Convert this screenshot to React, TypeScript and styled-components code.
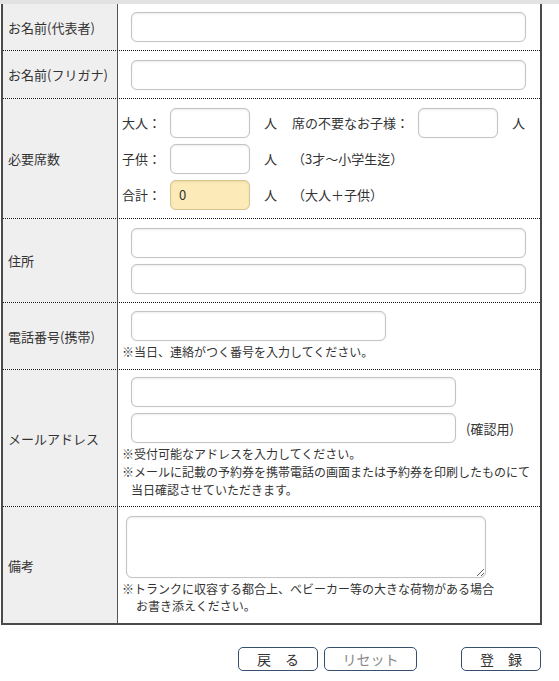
import React from 'react';
import styled, { createGlobalStyle } from 'styled-components';

const GlobalStyle = createGlobalStyle`
  html, body {
    margin: 0;
    padding: 0;
    background: #fff;
  }
  body {
    font-family: "Noto Sans CJK JP", "Noto Sans", sans-serif;
    color: #333;
    font-size: 13px;
  }
`;

const Page = styled.div`
  width: 559px;
`;

const TopBand = styled.div`
  height: 4px;
  background: #e2e2e2;
`;

const FormTable = styled.div`
  margin-left: 1px;
  width: 541px;
  box-sizing: border-box;
  border-left: 2px solid #4a4a4a;
  border-right: 2px solid #4a4a4a;
  border-bottom: 2px solid #4a4a4a;
`;

const Row = styled.div<{ $h: number; $last?: boolean }>`
  display: grid;
  grid-template-columns: 115px 1fr;
  box-sizing: border-box;
  height: ${(p) => p.$h}px;
  border-bottom: ${(p) => (p.$last ? 'none' : '1px dotted #111')};
`;

const Label = styled.div`
  display: flex;
  align-items: center;
  padding-left: 5px;
  background: #efefef;
  border-right: 1px solid #555;
  font-size: 13px;
  white-space: nowrap;
`;

const Cell = styled.div`
  display: flex;
  flex-direction: column;
  justify-content: center;
  align-items: flex-start;
  padding: 0 0 0 4px;
  min-width: 0;
`;

const Stack = styled.div`
  display: flex;
  flex-direction: column;
  gap: 6px;
  margin-left: 9px;
`;

const TextInput = styled.input<{ $w: number; $tint?: boolean }>`
  box-sizing: border-box;
  width: ${(p) => p.$w}px;
  height: 30px;
  border: 1px solid #c4c4c4;
  border-radius: 6px;
  background: ${(p) => (p.$tint ? '#fcebb9' : '#fff')};
  border-color: ${(p) => (p.$tint ? '#d8c68f' : '#c4c4c4')};
  box-shadow: inset 0 1px 2px rgba(0, 0, 0, 0.08), 0 0 1px rgba(0, 0, 0, 0.12);
  padding: 0 8px;
  font-family: inherit;
  font-size: 13px;
  color: #333;
  outline: none;
  margin: 0;
`;

const InlineRow = styled.div`
  display: flex;
  align-items: center;
`;

const Suffix = styled.span`
  margin-left: 10px;
  font-size: 13px;
`;

const SeatGrid = styled.div`
  display: flex;
  flex-direction: column;
  gap: 6px;
`;

const SeatLine = styled.div`
  display: flex;
  align-items: center;
  height: 30px;
  white-space: nowrap;
`;

const SeatLabel = styled.span<{ $w: number }>`
  width: ${(p) => p.$w}px;
  font-size: 13px;
`;

const Unit = styled.span`
  width: 42px;
  box-sizing: border-box;
  padding-left: 14px;
  font-size: 13px;
`;

const Notes = styled.div<{ $lh: number }>`
  margin-top: 2px;
  font-size: 12px;
  line-height: ${(p) => p.$lh}px;
  white-space: nowrap;
`;

const NoteLine = styled.div<{ $indent?: number }>`
  padding-left: ${(p) => p.$indent ?? 0}px;
`;

const Memo = styled.textarea`
  box-sizing: border-box;
  width: 360px;
  height: 62px;
  margin: 0 0 0 4px;
  border: 1px solid #c4c4c4;
  border-radius: 6px;
  box-shadow: inset 0 1px 2px rgba(0, 0, 0, 0.08), 0 0 1px rgba(0, 0, 0, 0.12);
  font-family: inherit;
  font-size: 13px;
  display: block;
  outline: none;
`;

const ButtonBar = styled.div`
  display: flex;
  justify-content: flex-end;
  width: 541px;
  margin-top: 22px;
`;

const Btn = styled.button<{ $w: number; $muted?: boolean; $gapAfter?: number }>`
  box-sizing: border-box;
  width: ${(p) => p.$w}px;
  height: 24px;
  margin-right: ${(p) => p.$gapAfter ?? 0}px;
  background: #fff;
  border: 1px solid #34506e;
  border-radius: 5px;
  font-family: inherit;
  font-size: 14px;
  line-height: 1;
  color: ${(p) => (p.$muted ? '#888' : '#333')};
  padding: 0;
  cursor: pointer;
`;

const App: React.FC = () => {
  return (
    <Page>
      <GlobalStyle />
      <TopBand />
      <FormTable>
        <Row $h={47}>
          <Label>お名前(代表者)</Label>
          <Cell>
            <Stack>
              <TextInput $w={395} />
            </Stack>
          </Cell>
        </Row>
        <Row $h={48}>
          <Label>お名前(フリガナ)</Label>
          <Cell>
            <Stack>
              <TextInput $w={395} />
            </Stack>
          </Cell>
        </Row>
        <Row $h={120}>
          <Label>必要席数</Label>
          <Cell>
            <SeatGrid>
              <SeatLine>
                <SeatLabel $w={48}>大人：</SeatLabel>
                <TextInput $w={80} />
                <Unit>人</Unit>
                <SeatLabel $w={126}>席の不要なお子様：</SeatLabel>
                <TextInput $w={80} />
                <Unit>人</Unit>
              </SeatLine>
              <SeatLine>
                <SeatLabel $w={48}>子供：</SeatLabel>
                <TextInput $w={80} />
                <Unit>人</Unit>
                <span>（3才～小学生迄）</span>
              </SeatLine>
              <SeatLine>
                <SeatLabel $w={48}>合計：</SeatLabel>
                <TextInput $w={80} $tint defaultValue="0" />
                <Unit>人</Unit>
                <span>（大人＋子供）</span>
              </SeatLine>
            </SeatGrid>
          </Cell>
        </Row>
        <Row $h={84}>
          <Label>住所</Label>
          <Cell>
            <Stack>
              <TextInput $w={395} />
              <TextInput $w={395} />
            </Stack>
          </Cell>
        </Row>
        <Row $h={67}>
          <Label>電話番号(携帯)</Label>
          <Cell>
            <Stack>
              <TextInput $w={255} />
            </Stack>
            <Notes $lh={18}>
              <NoteLine>※当日、連絡がつく番号を入力してください。</NoteLine>
            </Notes>
          </Cell>
        </Row>
        <Row $h={137}>
          <Label>メールアドレス</Label>
          <Cell>
            <Stack>
              <TextInput $w={325} />
              <InlineRow>
                <TextInput $w={325} />
                <Suffix>(確認用)</Suffix>
              </InlineRow>
            </Stack>
            <Notes $lh={18}>
              <NoteLine>※受付可能なアドレスを入力してください。</NoteLine>
              <NoteLine>※メールに記載の予約券を携帯電話の画面または予約券を印刷したものにて</NoteLine>
              <NoteLine $indent={9}>当日確認させていただきます。</NoteLine>
            </Notes>
          </Cell>
        </Row>
        <Row $h={116} $last>
          <Label>備考</Label>
          <Cell>
            <Memo />
            <Notes $lh={17}>
              <NoteLine>※トランクに収容する都合上、ベビーカー等の大きな荷物がある場合</NoteLine>
              <NoteLine $indent={14}>お書き添えください。</NoteLine>
            </Notes>
          </Cell>
        </Row>
      </FormTable>
      <ButtonBar>
        <Btn $w={80} $gapAfter={6}>戻　る</Btn>
        <Btn $w={93} $muted $gapAfter={44}>リセット</Btn>
        <Btn $w={80}>登　録</Btn>
      </ButtonBar>
    </Page>
  );
};

export default App;
